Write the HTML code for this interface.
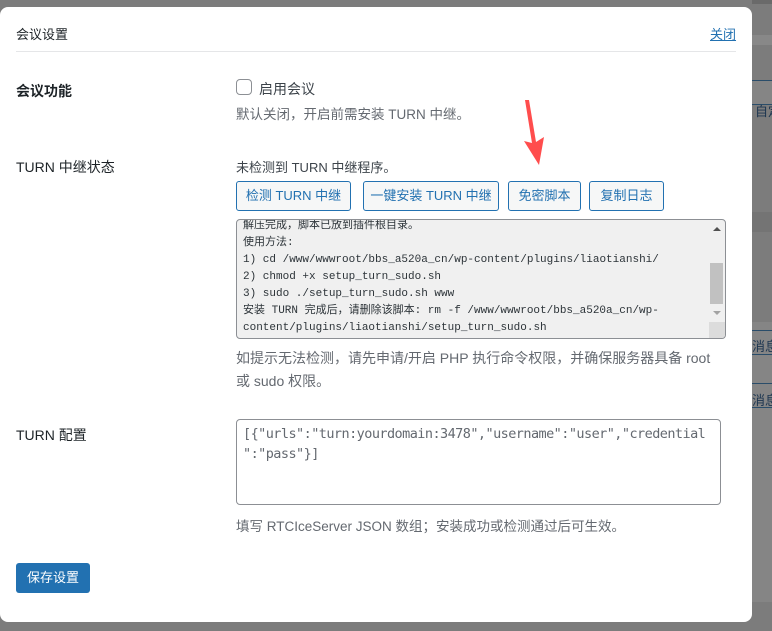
<!DOCTYPE html>
<html><head><meta charset="utf-8"><style>
*{box-sizing:border-box;margin:0;padding:0}
body{width:772px;height:631px;overflow:hidden;background:#7c7c7c;font-family:"Liberation Sans","Noto Sans CJK SC",sans-serif;color:#1d2327;position:relative}
.bg{position:absolute;left:752px;width:20px}
.modal{position:absolute;left:0;top:7px;width:752px;height:615px;background:#fff;border-radius:8px}
.a{position:absolute;white-space:nowrap}
.lbl{font-size:14px;font-weight:600;color:#1d2327}
.desc{font-size:13.5px;color:#646970}
.btn{position:absolute;top:181px;height:30px;border:1px solid #2271b1;border-radius:3px;background:#f6f7f7;color:#2271b1;font-size:13px;line-height:28px;text-align:center}
.ta{position:absolute;border:1px solid #8c8f94;border-radius:4px;font-family:"Liberation Mono","Noto Sans CJK SC",monospace;overflow:hidden}
</style></head><body>
<div class="bg" style="top:0;height:4px;background:#6a6a6a"></div>
<div class="bg" style="top:35px;height:10px;background:#888"></div>
<div class="bg" style="top:80px;height:25px;border-top:1px solid #2a4d6a;border-bottom:1px solid #2a4d6a;background:#858585"></div>
<div class="a" style="left:755px;top:101px;font-size:13px;color:#1c3550">自定</div>
<div class="bg" style="top:212px;height:20px;background:#747474"></div>
<div class="bg" style="top:322px;height:280px;background:#858585"></div>
<div class="bg" style="top:330px;height:25px;border-top:1px solid #2a4d6a;border-bottom:1px solid #2a4d6a"></div>
<div class="a" style="left:752px;top:336px;font-size:13px;color:#1c3550">消息</div>
<div class="bg" style="top:383px;height:25px;border-top:1px solid #2a4d6a;border-bottom:1px solid #2a4d6a"></div>
<div class="a" style="left:752px;top:390px;font-size:13px;color:#1c3550">消息</div>
<div class="modal"></div>
<div class="a" style="left:16px;top:24px;font-size:13px">会议设置</div>
<div class="a" style="left:710px;top:24px;font-size:13px;color:#2271b1;text-decoration:underline">关闭</div>
<div class="a" style="left:16px;top:51px;width:720px;height:1px;background:#e5e6e8"></div>

<div class="a lbl" style="left:16px;top:81px">会议功能</div>
<div class="a" style="left:236px;top:79px;width:16px;height:16px;border:1px solid #8c8f94;border-radius:4px"></div>
<div class="a" style="left:259px;top:79px;font-size:14px;color:#3c434a">启用会议</div>
<div class="a desc" style="left:236px;top:103px">默认关闭，开启前需安装 TURN 中继。</div>

<div class="a lbl" style="left:16px;top:157px;font-weight:400">TURN 中继状态</div>
<div class="a" style="left:236px;top:157px;font-size:13px;color:#3c434a">未检测到 TURN 中继程序。</div>
<div class="btn" style="left:236px;width:115px">检测 TURN 中继</div>
<div class="btn" style="left:363px;width:136px">一键安装 TURN 中继</div>
<div class="btn" style="left:508px;width:73px">免密脚本</div>
<div class="btn" style="left:589px;width:75px">复制日志</div>

<div class="ta" style="left:236px;top:219px;width:490px;height:120px;background:#f0f0f0;font-size:11px;line-height:17px;color:#2c3338">
<div style="position:absolute;left:6px;top:-2px;white-space:pre">解压完成，脚本已放到插件根目录。
使用方法:
1) cd /www/wwwroot/bbs_a520a_cn/wp-content/plugins/liaotianshi/
2) chmod +x setup_turn_sudo.sh
3) sudo ./setup_turn_sudo.sh www
安装 TURN 完成后，请删除该脚本: rm -f /www/wwwroot/bbs_a520a_cn/wp-
content/plugins/liaotianshi/setup_turn_sudo.sh</div>
<div style="position:absolute;left:473px;top:43px;width:13px;height:41px;background:#c1c1c1"></div>
<div style="position:absolute;left:476px;top:7px;border:4px solid transparent;border-bottom:4px solid #505050;border-top:0"></div>
<div style="position:absolute;left:476px;top:91px;border:4px solid transparent;border-top:4px solid #a3a3a3;border-bottom:0"></div>
<div style="position:absolute;left:472px;top:102px;width:16px;height:17px;background:#dcdcdc"></div>
</div>
<div class="a" style="left:236px;top:347px;font-size:14px;color:#646970;line-height:23px">如提示无法检测，请先申请/开启 PHP 执行命令权限，并确保服务器具备 root<br>或 sudo 权限。</div>

<div class="a lbl" style="left:16px;top:425px;font-weight:400">TURN 配置</div>
<div class="ta" style="left:236px;top:419px;width:485px;height:86px;background:#fff;font-size:13.5px;line-height:20px;color:#646970;font-family:'DejaVu Sans Mono','Liberation Mono',monospace;letter-spacing:-0.55px">
<div style="position:absolute;left:6px;top:4px;white-space:pre">[{"urls":"turn:yourdomain:3478","username":"user","credential
":"pass"}]</div></div>
<div class="a desc" style="left:236px;top:515px">填写 RTCIceServer JSON 数组；安装成功或检测通过后可生效。</div>

<div class="a" style="left:16px;top:563px;width:74px;height:30px;background:#2271b1;border-radius:3px;color:#fff;font-size:13px;line-height:30px;text-align:center">保存设置</div>

<svg class="a" style="left:0;top:0" width="772" height="631"><polygon points="525,100 529,100 536,142 544,137 539,165 524,141 532,143" fill="#ff4d4d"/></svg>
</body></html>
